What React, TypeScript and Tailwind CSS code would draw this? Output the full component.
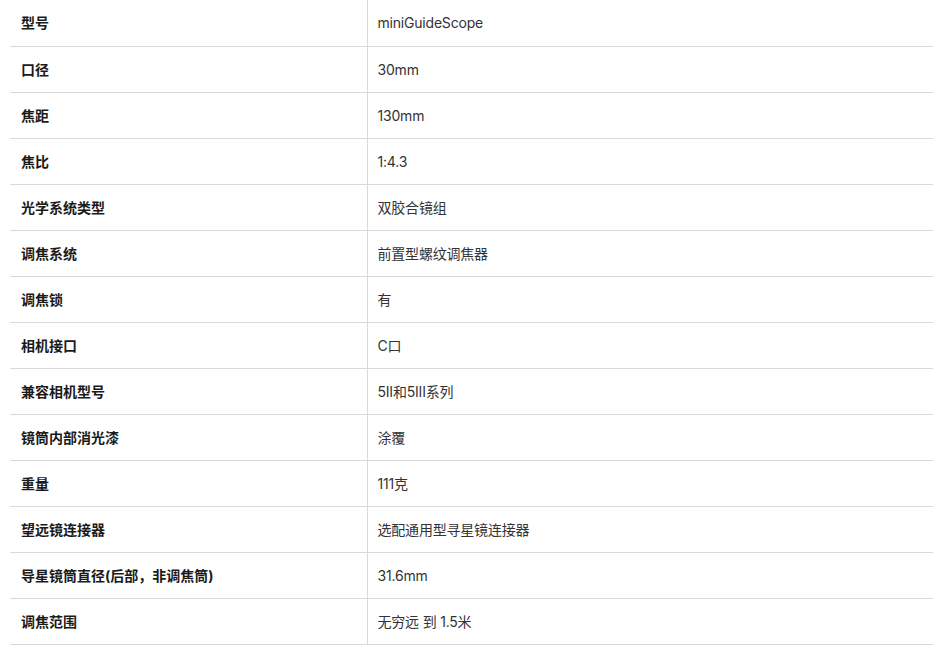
const rows: [string, string][] = [
  ["型号", "miniGuideScope"],
  ["口径", "30mm"],
  ["焦距", "130mm"],
  ["焦比", "1:4.3"],
  ["光学系统类型", "双胶合镜组"],
  ["调焦系统", "前置型螺纹调焦器"],
  ["调焦锁", "有"],
  ["相机接口", "C口"],
  ["兼容相机型号", "5II和5III系列"],
  ["镜筒内部消光漆", "涂覆"],
  ["重量", "111克"],
  ["望远镜连接器", "选配通用型寻星镜连接器"],
  ["导星镜筒直径(后部，非调焦筒)", "31.6mm"],
  ["调焦范围", "无穷远 到 1.5米"],
];

export default function App() {
  return (
    <div
      className="w-[933px] h-[661px] bg-white pl-[10px]"
      style={{ fontFamily: "Inter, 'Noto Sans CJK SC', sans-serif" }}
    >
      <table className="w-full border-collapse text-[14px]">
        <tbody>
          {rows.map(([k, v]) => (
            <tr key={k} className="h-[46px] border-b border-[#d9d9d9]">
              <td className="w-[357px] pl-[11px] font-bold text-[#1a1a1a] border-r border-[#d9d9d9]">
                {k}
              </td>
              <td className="pl-[10px] text-[#333] tracking-[-0.2px]">{v}</td>
            </tr>
          ))}
        </tbody>
      </table>
    </div>
  );
}
